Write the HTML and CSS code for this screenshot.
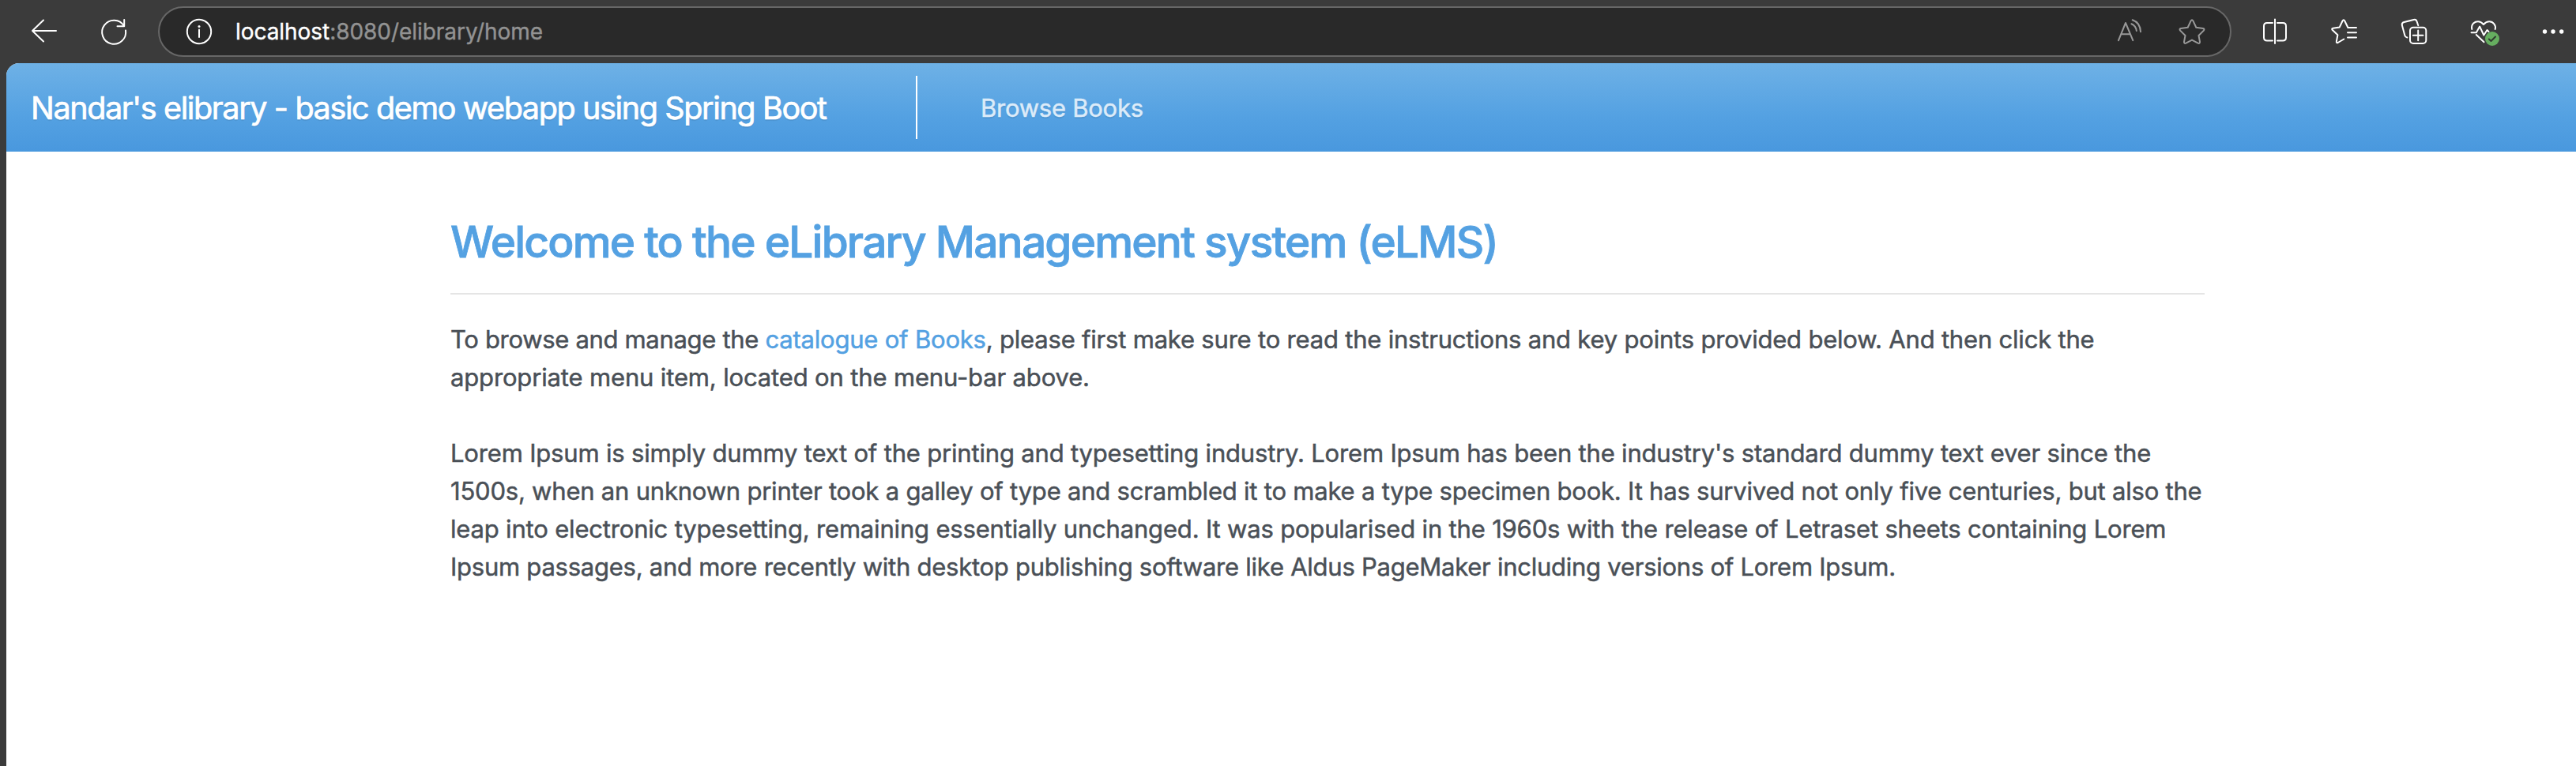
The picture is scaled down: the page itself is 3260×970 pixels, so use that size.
FILE: index.html
```html
<!DOCTYPE html>
<html lang="en">
<head>
<meta charset="utf-8">
<title>eLibrary</title>
<link rel="stylesheet" href="styles.css">
</head>
<body>
<div class="toolbar">
  <div class="nav-buttons">
    <svg class="icon" viewBox="32 16 48 48"><path d="M71 39H41M55 25.5 41 39 55 52.5"/></svg>
    <svg class="icon" viewBox="120 16 48 48"><path d="M157 33A15 15 0 1 0 159 38.5M157.2 25V33.2H148.5"/></svg>
  </div>
  <div class="address">
    <svg class="icon" viewBox="228 16 48 48"><circle cx="252" cy="40" r="15.2"/><path d="M252 37.5V47"/><circle class="solid" cx="252" cy="33.4" r="1.5"/></svg>
    <div class="url"><span class="host">localhost</span>:8080/elibrary/home</div>
    <div class="address-actions">
      <svg class="icon muted" viewBox="2671 16 48 48"><path d="M2681 51.2 2690 29l9.3 22.2M2684.3 43.3h11.6M2698.7 25.2Q2708.5 28.5 2709 40.2M2697.4 30.2Q2703 32.5 2703.8 39"/></svg>
      <svg class="icon muted" viewBox="2750 16 48 48"><path d="M2772.6 26.4q1.4-2.4 2.8 0l3.9 8.3 8.7 1.3q2.4.6.9 2.6l-6.4 6.4 1.5 8q0 2.6-2.4 1.6l-7.6-4-7.6 4q-2.4 1-2.4-1.6l1.5-8-6.4-6.4q-1.5-2 .9-2.6l8.7-1.3z"/></svg>
    </div>
  </div>
  <div class="tools">
    <svg class="icon" viewBox="2855 16 48 48"><path d="M2879 24.5V55M2876 29h-7q-4 0-4 4v14.500q0 4 4 4h7M2882 29h7q4 0 4 4v14.500q0 4-4 4h-7"/></svg>
    <svg class="icon" viewBox="2945 16 48 48"><path d="M2968.3 49.5l-7.600 4.500q-2.200.8-1.800-1.700l1.500-8-6.600-6.200q-1.500-2 .7-2.400l8.300-1.300 3.700-7.900q1.400-2.300 2.800 0l4.100 8.500H2984M2973 41.300h11M2973 47.500h11"/></svg>
    <svg class="icon" viewBox="3032 16 48 48"><rect x="3051" y="34.700" width="20.300" height="20.300" rx="4"/><path d="M3061.200 38.500v12.700M3054.800 44.800h12.700M3047.300 47.500q-2.300-.3-2.900-2.500L3041 32.500q-1-3.500 2.400-4.500l12.200-3q3-.8 4 2.200l1.700 5"/></svg>
    <svg class="icon" viewBox="3120 16 48 48"><path d="M3129.300 37c-1.500-7 4-9.700 7.700-9.700 3.600 0 5.200 1.700 7 3.700 1.800-2 3.600-3.700 7.200-3.700 5 0 9 4.700 7.500 9.700M3128.500 41.200h6.300l4.300-7.700 5.200 11 4.200-6.500 2 2M3134.800 44l9.700 9.200"/><circle class="badge" cx="3155" cy="49" r="9"/><path class="tick" d="M3150.800 49.500l2.700 2.500 5.500-5.500"/></svg>
    <svg class="icon" viewBox="3208 16 48 48"><g class="solid"><circle cx="3221.500" cy="40" r="2.700"/><circle cx="3232" cy="40" r="2.700"/><circle cx="3242.700" cy="40" r="2.700"/></g></svg>
  </div>
</div>
<div class="page">
  <header class="navbar">
    <div class="brand">Nandar's elibrary - basic demo webapp using Spring Boot</div>
    <div class="divider"></div>
    <a class="nav-link">Browse Books</a>
  </header>
  <main class="content">
    <h1 class="title">Welcome to the eLibrary Management system (eLMS)</h1>
    <div class="rule"></div>
    <p class="text"><span class="tightest">To browse and manage the </span><a class="link">catalogue of Books</a>, please first make sure to read the instructions and key points provided below. And then click the<br><span class="loose">appropriate menu item, located on the menu-bar above.</span></p>
    <p class="text"><span class="snug">Lorem Ipsum is simply dummy text of the printing and typesetting industry. Lorem Ipsum has been the industry's standard dummy text ever since the</span><br><span class="even">1500s, when an unknown printer took a galley of type and scrambled it to make a type specimen book. It has survived not only five centuries, but also the</span><br><span class="snug">leap into electronic typesetting, remaining essentially unchanged. It was popularised in the 1960s with the release of Letraset sheets containing Lorem</span><br><span class="tight">Ipsum passages, and more recently with desktop publishing software like Aldus PageMaker including versions of Lorem Ipsum.</span></p>
  </main>
</div>
</body>
</html>
```
FILE: styles.css
```css
* { box-sizing: border-box; }
body {
  margin: 0;
  height: 970px;
  display: flex;
  flex-direction: column;
  overflow: hidden;
  background: #3b3b3b;
  font-family: Inter, "Liberation Sans", sans-serif;
}

/* Browser toolbar */
.toolbar { flex: none; height: 80px; display: flex; align-items: center; }
.nav-buttons { display: flex; gap: 40px; padding: 0 32px; }
.icon {
  display: block;
  flex: none;
  width: 48px;
  height: 48px;
  fill: none;
  stroke: #fff;
  stroke-width: 2;
  stroke-linecap: round;
  stroke-linejoin: round;
}
.icon.muted { stroke: #999; }
.icon .solid { fill: #fff; stroke: none; }
.icon .badge { fill: #66ae60; stroke: none; }
.icon .tick { stroke: #303b30; }
.address {
  width: 2624px;
  height: 64px;
  display: flex;
  align-items: center;
  padding: 0 24px 0 26px;
  border: 2px solid #676767;
  border-radius: 32px;
  background: #292929;
}
.url {
  padding-left: 22px;
  font-size: 28px;
  line-height: 40px;
  letter-spacing: -0.05px;
  color: #929292;
  -webkit-text-stroke: 0.4px;
}
.host { color: #fff; }
.address-actions { display: flex; gap: 31px; margin-left: auto; }
.tools { display: flex; gap: 40px; padding-left: 31px; }

/* Web page */
.page {
  flex: 1;
  margin-left: 8px;
  border-top-left-radius: 16px;
  overflow: hidden;
  background: #fff;
}
.navbar {
  height: 112px;
  display: flex;
  align-items: center;
  padding-left: 31px;
  background: linear-gradient(#6eb1e6, #54a1e2 60%, #4998de);
  text-shadow: 0 2px 1px rgba(0, 0, 0, 0.08);
  white-space: nowrap;
}
.brand {
  width: 1120px;
  padding-top: 2px;
  font-size: 39.5px;
  line-height: 60px;
  letter-spacing: -1.37px;
  color: #fff;
  -webkit-text-stroke: 0.7px;
}
.divider { width: 2px; height: 80px; background: #fff; }
.nav-link {
  padding: 2px 0 0 80px;
  font-size: 31px;
  line-height: 48px;
  letter-spacing: -0.25px;
  color: #dcebf9;
  -webkit-text-stroke: 0.5px;
}

.content { width: 2220px; margin-left: 562px; padding-top: 81px; }
.title {
  margin: 0;
  padding-bottom: 31px;
  font-size: 55px;
  font-weight: 500;
  line-height: 67px;
  letter-spacing: -1.77px;
  color: #54a1e2;
  -webkit-text-stroke: 0.8px;
}
.rule { height: 2px; background: #e5e5e5; margin-bottom: 33px; }
.text {
  margin: 0 0 48px;
  font-size: 31px;
  line-height: 48px;
  letter-spacing: -0.2px;
  color: #4a5057;
  white-space: nowrap;
  -webkit-text-stroke: 0.5px;
}
.link { color: #54a1e2; }
.tightest { letter-spacing: -0.32px; }
.tight { letter-spacing: -0.25px; }
.snug { letter-spacing: -0.18px; }
.even { letter-spacing: -0.21px; }
.loose { letter-spacing: -0.15px; }
```
